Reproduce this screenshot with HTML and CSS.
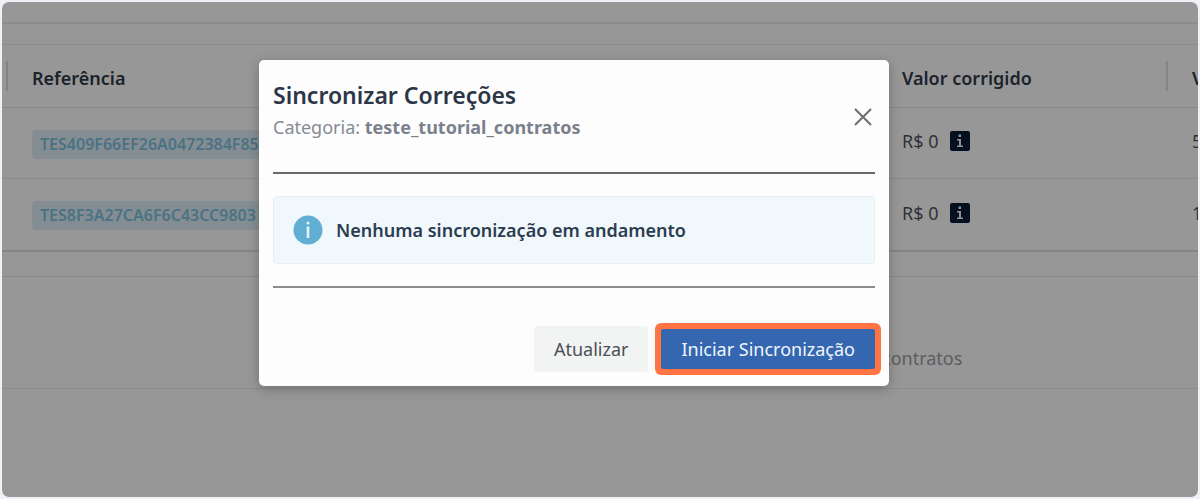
FILE: index.html
```html
<!DOCTYPE html>
<html lang="pt-BR">
<head>
    <meta charset="UTF-8">
    <meta name="viewport" content="width=device-width, initial-scale=1.0">
    <title>Sincronizar Correções</title>
    <link rel="stylesheet" href="styles.css">
</head>
<body>

<div class="screen">
    <div class="toolbar"></div>

    <main class="content">
        <table class="contracts">
            <colgroup>
                <col class="col-first">
                <col class="col-reference">
                <col class="col-value">
                <col class="col-last">
            </colgroup>
            <thead>
                <tr>
                    <th class="divided"></th>
                    <th>Referência</th>
                    <th class="divided">Valor corrigido</th>
                    <th>V</th>
                </tr>
            </thead>
            <tbody>
                <tr>
                    <td></td>
                    <td><span class="tag">TES409F66EF26A0472384F85</span></td>
                    <td class="amount">
                        <div class="value">
                            <span>R$ 0</span>
                            <svg class="info-square" viewBox="0 0 20 20" aria-hidden="true">
                                <rect width="20" height="20" rx="2" fill="#081a35"/>
                                <path d="M8.500 3.500h2.500v2.500h-2.500zM7 8h4v6.500h2v1.500h-6v-1.500h2v-5h-2z" fill="#eef4f8"/>
                            </svg>
                        </div>
                    </td>
                    <td class="amount">5</td>
                </tr>
                <tr>
                    <td></td>
                    <td><span class="tag">TES8F3A27CA6F6C43CC9803</span></td>
                    <td class="amount">
                        <div class="value">
                            <span>R$ 0</span>
                            <svg class="info-square" viewBox="0 0 20 20" aria-hidden="true">
                                <rect width="20" height="20" rx="2" fill="#081a35"/>
                                <path d="M8.500 3.500h2.500v2.500h-2.500zM7 8h4v6.500h2v1.500h-6v-1.500h2v-5h-2z" fill="#eef4f8"/>
                            </svg>
                        </div>
                    </td>
                    <td class="amount">1</td>
                </tr>
            </tbody>
        </table>
    </main>

    <footer class="page-footer">
        <p>contratos</p>
    </footer>

    <!-- Modal -->
    <div class="overlay">
        <div class="modal" role="dialog" aria-labelledby="modal-title">
            <div class="modal-header">
                <div>
                    <h2 id="modal-title">Sincronizar Correções</h2>
                    <p>Categoria: <strong>teste_tutorial_contratos</strong></p>
                </div>
                <button class="close" type="button" aria-label="Fechar">
                    <svg viewBox="0 0 18 18" aria-hidden="true">
                        <path d="M1 1l16 16M17 1L1 17" fill="none" stroke="#6e6e6e" stroke-width="2"/>
                    </svg>
                </button>
            </div>

            <div class="alert">
                <svg class="alert-icon" viewBox="0 0 30 30" aria-hidden="true">
                    <circle cx="15" cy="15" r="14.500" fill="#61aed3"/>
                    <circle cx="15" cy="8" r="1.600" fill="#e4f3fa"/>
                    <rect x="13.700" y="11.500" width="2.600" height="11.500" fill="#e4f3fa"/>
                </svg>
                <span>Nenhuma sincronização em andamento</span>
            </div>

            <div class="modal-footer">
                <button class="btn btn-light" type="button">Atualizar</button>
                <button class="btn btn-primary" type="button">Iniciar Sincronização</button>
            </div>
        </div>
    </div>
</div>

</body>
</html>
```
FILE: styles.css
```css
* {
    box-sizing: border-box;
}

body {
    margin: 0;
    padding: 2px;
    min-height: 100vh;
    display: flex;
    background-color: #f0f0f7;
    font-family: "Noto Sans", "Open Sans", sans-serif;
    font-size: 18px;
    color: #303949;
}

h2,
p {
    margin: 0;
}

.screen {
    position: relative;
    flex: 1;
    min-width: 0;
    overflow: hidden;
    border-radius: 7px;
    background-color: #fcfcfc;
}

.toolbar {
    height: 22px;
    border-bottom: 2px solid #e9e9e9;
}

.content {
    padding: 20px 0 24px;
    border-bottom: 1px solid #e4e4e4;
}

/* Table */
.contracts {
    width: 1460px;
    table-layout: fixed;
    border-collapse: separate;
    border-spacing: 0;
    border-top: 1px solid #ececec;
    border-bottom: 2px solid #dedede;
}

.col-first {
    width: 6px;
}

.col-reference {
    width: 870px;
}

.col-value {
    width: 290px;
}

.contracts th,
.contracts td {
    padding: 0 0 0 24px;
    text-align: left;
    white-space: nowrap;
}

.contracts th:first-child,
.contracts td:first-child {
    padding: 0;
}

.contracts th {
    height: 63px;
    padding-top: 4px;
    font-weight: 600;
    border-bottom: 1px solid #e4e4e4;
}

.contracts td {
    height: 71px;
    padding-top: 2px;
    color: #50545c;
}

.contracts td.amount {
    padding-top: 0;
    padding-bottom: 4px;
}

.contracts tbody tr:first-child td {
    border-bottom: 1px solid #e6e6e6;
}

.divided {
    background: linear-gradient(#dcdcdc, #dcdcdc) right center / 2px 30px no-repeat;
}

.tag {
    display: inline-block;
    padding: 0 8px;
    border-radius: 4px;
    background-color: #dcedf4;
    color: #7dbfdd;
    font-size: 16px;
    line-height: 29px;
    font-weight: 600;
}

.value {
    display: flex;
    align-items: center;
    gap: 12px;
}

.info-square {
    width: 20px;
    height: 20px;
}

.page-footer {
    height: 112px;
    padding: 67px 0 0 880px;
    border-bottom: 1px solid #ebebeb;
    color: #989ca4;
    line-height: 28px;
}

/* Modal */
.overlay {
    position: absolute;
    inset: 0;
    display: flex;
    justify-content: center;
    align-items: flex-start;
    padding: 58px 52px 0 0;
    background-color: rgba(0, 0, 0, 0.4);
}

.modal {
    width: 630px;
    padding: 14px;
    border-radius: 5px;
    background-color: #fdfdfd;
    box-shadow: 0 3px 12px rgba(0, 0, 0, 0.25);
}

.modal-header {
    display: flex;
    justify-content: space-between;
    align-items: flex-end;
    padding: 5px 0 28px;
    border-bottom: 2px solid #6a6a6c;
}

.modal-header h2 {
    font-size: 23px;
    line-height: 32px;
    font-weight: 600;
    color: #2c3648;
}

.modal-header p {
    line-height: 33px;
    color: #858b95;
}

.modal-header strong {
    font-weight: 700;
    color: #7b818c;
}

.close {
    display: flex;
    padding: 18px 3px;
    border: none;
    background: none;
    cursor: pointer;
}

.close svg {
    width: 18px;
    height: 18px;
}

.alert {
    display: flex;
    align-items: center;
    gap: 13px;
    height: 68px;
    margin: 22px 0;
    padding: 0 19px;
    border: 1px solid #e4eff4;
    border-radius: 4px;
    background-color: #f1f8fb;
    font-weight: 600;
    color: #2c3c50;
}

.alert-icon {
    width: 30px;
    height: 30px;
}

.modal-footer {
    display: flex;
    justify-content: flex-end;
    align-items: center;
    gap: 13px;
    padding-top: 38px;
    border-top: 2px solid #8c8c8e;
}

.btn {
    border: none;
    font-family: inherit;
    font-size: 18px;
    line-height: 24px;
    cursor: pointer;
}

.btn-light {
    padding: 11px 20px;
    border-radius: 4px;
    background-color: #f2f3f3;
    color: #4a4f57;
}

.btn-primary {
    padding: 8px 20px;
    border-radius: 2px;
    background-color: #3467b0;
    color: #f1f6fd;
    box-shadow: 0 0 0 6px #ff7442;
}
```
